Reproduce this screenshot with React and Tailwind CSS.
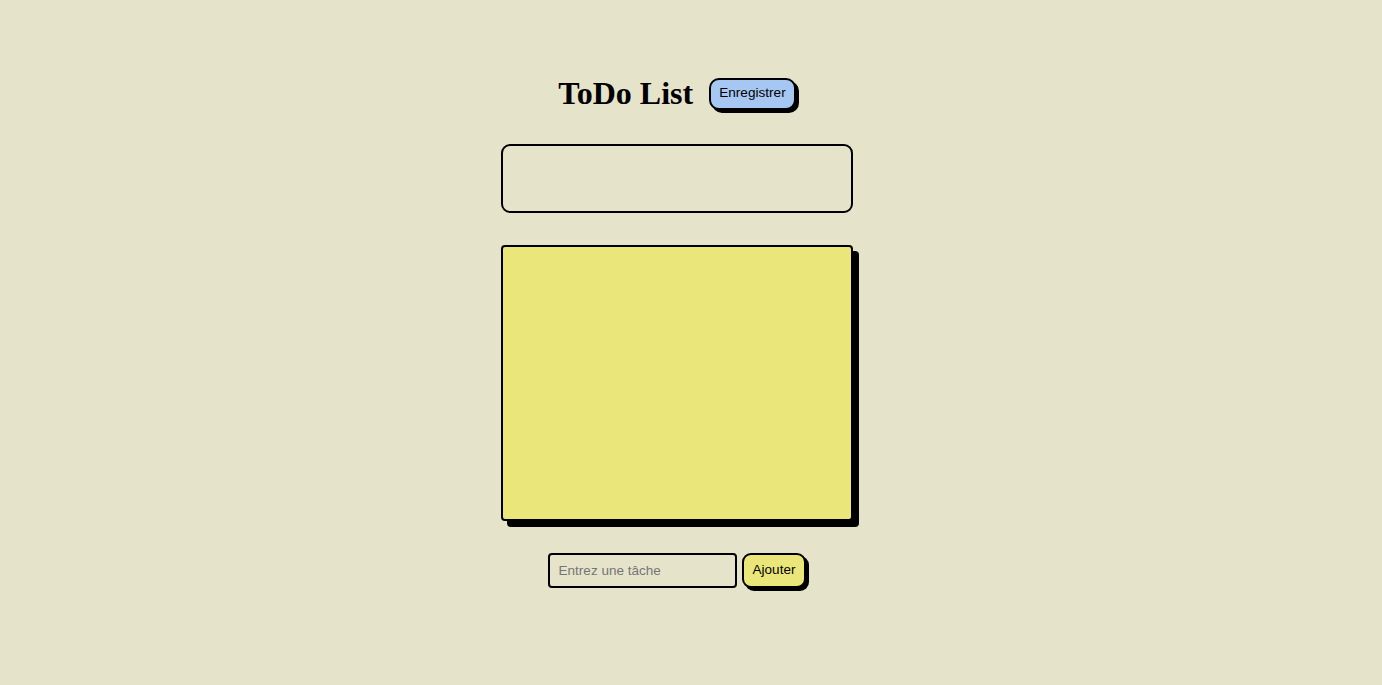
export default function App() {
  return (
    <div className="min-h-screen w-full bg-[#e5e4cb] flex flex-col items-center pt-[75px] pr-[28px] font-['Liberation_Sans',Arial,sans-serif] text-black">
      {/* header */}
      <div className="flex items-center gap-4 h-[37px]">
        <h1 className="font-['Liberation_Serif','Times_New_Roman',serif] font-bold text-[32px] leading-[37px]">
          ToDo List
        </h1>
        <button className="h-[32px] px-[8px] bg-[#a6c7f2] border-2 border-black rounded-[10px] shadow-[3px_3px_0_#000] text-[13.6px]">
          Enregistrer
        </button>
      </div>

      {/* empty box */}
      <div className="mt-[32px] w-[352px] h-[69px] border-2 border-black rounded-[9px]"></div>

      {/* note */}
      <div className="mt-[32px] w-[352px] h-[276px] bg-[#ebe67a] border-2 border-black rounded-[4px] shadow-[6px_6px_0_#000]"></div>

      {/* add task */}
      <div className="mt-[32px] flex items-start gap-[5px]">
        <input
          type="text"
          placeholder="Entrez une tâche"
          className="w-[189px] h-[35px] px-[9px] bg-transparent border-2 border-black rounded-[4px] text-[13.5px] placeholder:text-[#757575] outline-none"
        />
        <button className="h-[35px] px-[9px] bg-[#ebe67a] border-2 border-black rounded-[9px] shadow-[3px_3px_0_#000] text-[13.5px]">
          Ajouter
        </button>
      </div>
    </div>
  );
}
